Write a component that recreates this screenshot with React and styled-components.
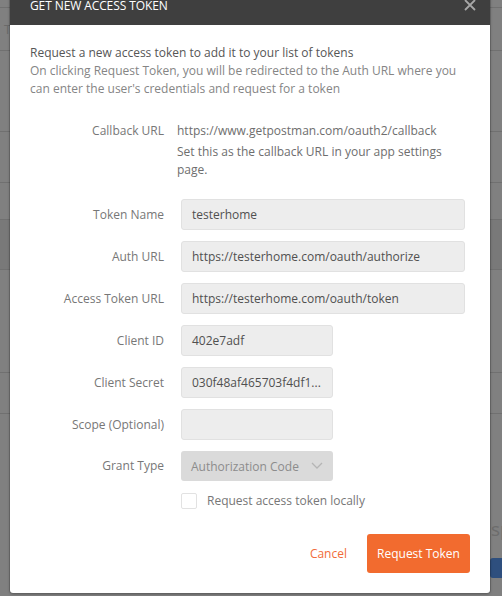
import React from "react";
import styled, { createGlobalStyle } from "styled-components";

const Global = createGlobalStyle`
  html, body { margin: 0; padding: 0; }
  body {
    width: 502px; height: 596px; overflow: hidden;
    font-family: "Open Sans", "Noto Sans", sans-serif;
    background: #808080;
  }
  * { box-sizing: border-box; }
`;

const Screen = styled.div`
  position: relative;
  width: 502px;
  height: 596px;
  overflow: hidden;
  background: #808080;
`;

const Behind = styled.div`
  display: flex;
  flex-direction: column;
  width: 100%;
`;

const BgRow = styled.div`
  height: ${(p) => p.h}px;
  border-bottom: 1px solid ${(p) => p.line || "#707070"};
  background: ${(p) => p.bg || "transparent"};
  display: flex;
  align-items: center;
  padding-left: 4px;
  color: #6a6a6a;
  font-size: 13px;
`;

const BgRight = styled.div`
  position: absolute;
  left: 490px;
  top: 516px;
  display: flex;
  flex-direction: column;
  align-items: flex-start;
  gap: 16px;
`;

const BgText = styled.span`
  font-size: 19px;
  color: #6c6c6c;
  line-height: 26px;
  padding-left: 1px;
  white-space: nowrap;
`;

const BgButton = styled.div`
  width: 20px;
  height: 20px;
  background: #2e4f7e;
  border-radius: 3px;
`;

const Modal = styled.div`
  position: absolute;
  left: 10px;
  top: -15px;
  width: 480px;
  background: #fff;
  border-radius: 0 0 3px 3px;
  box-shadow: 0 1px 3px rgba(0, 0, 0, 0.35), 1px 0 0 rgba(0,0,0,0.12), -1px 0 0 rgba(0,0,0,0.12);
`;

const Header = styled.div`
  height: 40px;
  background: #3f3f3f;
  display: flex;
  align-items: center;
  justify-content: space-between;
  padding: 0 14px 0 20px;
`;

const Title = styled.div`
  color: #fff;
  font-size: 12px;
  letter-spacing: -0.1px;
`;

const Close = styled.svg`
  width: 12px;
  height: 12px;
`;

const Body = styled.div`
  padding: 19px 20px 20px 20px;
`;

const Intro = styled.div`
  font-size: 12px;
  line-height: 18px;
  color: #565656;
`;

const IntroSub = styled.div`
  color: #858585;
`;

const Form = styled.div`
  margin-top: 24px;
  display: flex;
  flex-direction: column;
  gap: 11px;
`;

const Row = styled.div`
  display: flex;
  align-items: ${(p) => (p.top ? "flex-start" : "center")};
  gap: ${(p) => p.gap || 17}px;
  margin-bottom: ${(p) => p.mb || 0}px;
`;

const Label = styled.div`
  width: 134px;
  text-align: right;
  font-size: 12px;
  line-height: 18px;
  color: #777;
  flex-shrink: 0;
`;

const Callback = styled.div`
  font-size: 12px;
  line-height: 18px;
  color: #6e6e6e;
  width: 275px;
`;

const CallbackNote = styled.div`
  margin-top: 3px;
`;

const Input = styled.div`
  width: ${(p) => (p.wide ? 284 : 152)}px;
  height: 31px;
  background: #ededed;
  border: 1px solid #e1e1e1;
  border-radius: 3px;
  padding: 0 10px;
  display: flex;
  align-items: center;
  font-size: 12px;
  color: #505050;
  white-space: nowrap;
  overflow: hidden;
`;

const Select = styled.div`
  width: 152px;
  height: 30px;
  background: #dadada;
  border-radius: 3px;
  padding: 0 10px;
  display: flex;
  align-items: center;
  justify-content: space-between;
  font-size: 12px;
  color: #8c8c8c;
`;

const CheckWrap = styled.label`
  display: flex;
  align-items: center;
  gap: 10px;
`;

const Check = styled.div`
  width: 16px;
  height: 16px;
  border: 1px solid #e2e2e2;
  border-radius: 2px;
  background: #fff;
`;

const CheckLabel = styled.div`
  font-size: 12px;
  color: #777;
`;

const Footer = styled.div`
  margin-top: 25px;
  display: flex;
  justify-content: flex-end;
  align-items: center;
  gap: 20px;
`;

const Cancel = styled.div`
  font-size: 12px;
  color: #f26b3a;
`;

const Primary = styled.div`
  width: 103px;
  height: 39px;
  background: #f26b2f;
  border-radius: 3px;
  color: #fff;
  font-size: 12px;
  display: flex;
  align-items: center;
  justify-content: center;
`;

const fields = [
  ["Token Name", "testerhome", true],
  ["Auth URL", "https://testerhome.com/oauth/authorize", true],
  ["Access Token URL", "https://testerhome.com/oauth/token", true],
  ["Client ID", "402e7adf", false],
  ["Client Secret", "030f48af465703f4df1...", false],
  ["Scope (Optional)", "", false],
];

export default function App() {
  return (
    <>
      <Global />
      <Screen>
        <Behind>
          <BgRow h={8} />
          <BgRow h={43}>T</BgRow>
          <BgRow h={81} />
          <BgRow h={51} />
          <BgRow h={37} />
          <BgRow h={50} bg="#797979" />
          <BgRow h={103} />
          <BgRow h={41} />
        </Behind>
        <BgRight>
          <BgText>sp</BgText>
          <BgButton />
        </BgRight>
        <Modal>
          <Header>
            <Title>GET NEW ACCESS TOKEN</Title>
            <Close viewBox="0 0 12 12">
              <path d="M1 1 L11 11 M11 1 L1 11" stroke="#a8a8a8" strokeWidth="1.8" fill="none" />
            </Close>
          </Header>
          <Body>
            <Intro>
              Request a new access token to add it to your list of tokens
              <IntroSub>
                On clicking Request Token, you will be redirected to the Auth URL where you can enter the user's credentials and request for a token
              </IntroSub>
            </Intro>
            <Form>
              <Row top gap={13} mb={9}>
                <Label>Callback URL</Label>
                <Callback>
                  https://www.getpostman.com/oauth2/callback
                  <CallbackNote>Set this as the callback URL in your app settings page.</CallbackNote>
                </Callback>
              </Row>
              {fields.map(([l, v, w]) => (
                <Row key={l}>
                  <Label>{l}</Label>
                  <Input wide={w}>{v}</Input>
                </Row>
              ))}
              <Row>
                <Label>Grant Type</Label>
                <Select>
                  Authorization Code
                  <svg width="12" height="8" viewBox="0 0 12 8">
                    <path d="M1 1 L6 6 L11 1" stroke="#b5b5b5" strokeWidth="1.3" fill="none" />
                  </svg>
                </Select>
              </Row>
              <Row>
                <Label />
                <CheckWrap>
                  <Check />
                  <CheckLabel>Request access token locally</CheckLabel>
                </CheckWrap>
              </Row>
            </Form>
            <Footer>
              <Cancel>Cancel</Cancel>
              <Primary>Request Token</Primary>
            </Footer>
          </Body>
        </Modal>
      </Screen>
    </>
  );
}
